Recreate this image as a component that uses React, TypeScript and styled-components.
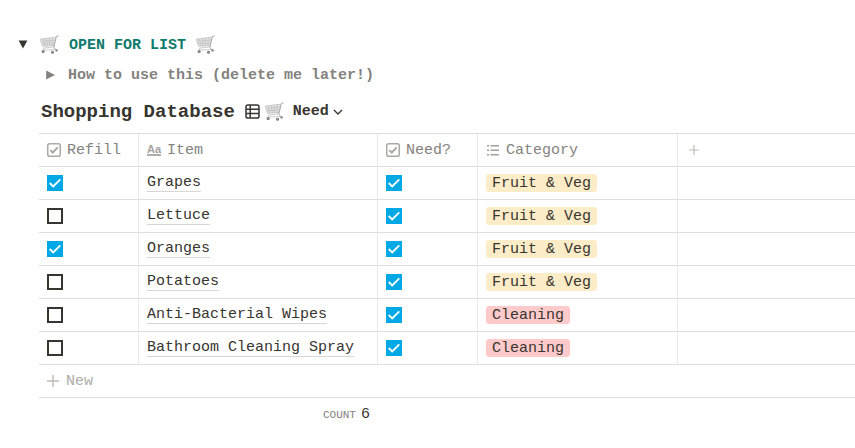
import React, { useState } from "react";
import styled, { createGlobalStyle } from "styled-components";

const GlobalStyle = createGlobalStyle`
  * { box-sizing: border-box; }
  body {
    margin: 0;
    background: #fff;
    color: #37352f;
    font-family: "Liberation Mono", monospace;
    font-size: 15px;
    line-height: 20px;
  }
  button, input { font: inherit; color: inherit; margin: 0; }
  svg { display: block; flex: none; }
`;

const Page = styled.main`
  padding: 30px 0 16px 16px;
`;

const Label = styled.span`
  padding-top: 2px;
`;

const Toggle = styled.button<{ $nested?: boolean }>`
  display: flex;
  align-items: center;
  height: 30px;
  padding: 0;
  border: 0;
  background: none;
  font-weight: 700;
  white-space: pre;
  cursor: pointer;
  gap: ${(p) => (p.$nested ? 12 : 9)}px;
  margin-left: ${(p) => (p.$nested ? 28 : 0)}px;
  color: ${(p) => (p.$nested ? "#84827e" : "#0f7b6c")};
`;

const Content = styled.section`
  padding-left: 23px;
`;

const Heading = styled.header`
  display: flex;
  align-items: center;
  gap: 10px;
  height: 43px;
  padding-left: 2px;
`;

const Title = styled.h2`
  margin: 0;
  font-size: 19px;
  line-height: 22px;
`;

const ViewButton = styled.button`
  display: flex;
  align-items: center;
  gap: 4px;
  padding: 0;
  border: 0;
  background: none;
  font-weight: 700;
  cursor: pointer;
`;

const ViewName = styled.span`
  padding-left: 4px;
`;

const Table = styled.table`
  width: 100%;
  table-layout: fixed;
  border-collapse: separate;
  border-spacing: 0;
  border-top: 1px solid #dededd;
`;

const Column = styled.col<{ $width?: number }>`
  width: ${(p) => (p.$width ? p.$width + "px" : "auto")};
`;

const HeadCell = styled.th`
  height: 33px;
  padding: 0 8px;
  border-bottom: 1px solid #dededd;
  border-right: 1px solid #e9e9e8;
  color: #84827e;
  font-weight: 400;
  text-align: left;
  &:last-child { border-right: 0; }
`;

const HeadLabel = styled.span`
  display: flex;
  align-items: center;
  gap: 6px;
`;

const Cell = styled.td`
  height: 33px;
  padding: 0 8px;
  border-bottom: 1px solid #dededd;
  border-right: 1px solid #e9e9e8;
  white-space: nowrap;
  &:last-child { border-right: 0; }
`;

const NewCell = styled.td`
  height: 33px;
  padding: 0 8px;
  border-bottom: 1px solid #dededd;
`;

const CountCell = styled.td`
  height: 34px;
  padding: 0 8px;
  text-align: right;
`;

const CountLabel = styled.span`
  margin-right: 5px;
  color: #84827e;
  font-size: 11px;
`;

const PlainButton = styled.button<{ $inset?: boolean }>`
  display: flex;
  align-items: center;
  gap: 7px;
  padding: 0 ${(p) => (p.$inset ? 3 : 0)}px;
  border: 0;
  background: none;
  color: #aeadaa;
  cursor: pointer;
`;

const ItemLink = styled.a`
  display: block;
  width: fit-content;
  padding-top: 1px;
  color: inherit;
  line-height: 16px;
  text-decoration: none;
  border-bottom: 1px solid #d8d7d5;
`;

const Tag = styled.span<{ $color: string }>`
  display: block;
  width: fit-content;
  padding: 1px 6px 0;
  border-radius: 3px;
  line-height: 17px;
  background: ${(p) => p.$color};
`;

const CheckWrap = styled.span`
  display: grid;
  width: 16px;
  height: 16px;
  & > * { grid-area: 1 / 1; }
  & > svg { pointer-events: none; place-self: center; z-index: 1; }
`;

const CheckInput = styled.input`
  appearance: none;
  width: 16px;
  height: 16px;
  border: 2px solid #37352f;
  background: #fff;
  cursor: pointer;
  &:checked { border: 0; background: #00a9e6; }
`;

const Cart = () => (
  <svg width="21" height="20" viewBox="0 0 21 20" fill="none" aria-hidden="true">
    <path d="M1.2 4.1 16.6 2.2 15 10.8 4 11.5Z" fill="#e4e4e4" />
    <path d="M1.2 4.1 16.6 2.2M2 6.5 16 5M2.8 8.8 15.5 7.8M3.4 11.3 15 10.5M4.2 3.8 6 11.2M7.2 3.5 8.4 11.1M10.2 3.1 10.7 10.9M13.4 2.7 12.9 10.8M1.2 4.1 3.5 11.5" stroke="#bcbcbc" strokeWidth=".7" />
    <path d="M19.2 .9 17.3 1.6 14.8 12.1 17 15.1" stroke="#a2a2a2" strokeWidth="1" strokeLinecap="round" strokeLinejoin="round" />
    <path d="M14.8 11.8 4.5 13.2 4 15.2 17 14.5" stroke="#c4c4c4" strokeWidth=".9" />
    <circle cx="4.1" cy="16.5" r="1.5" fill="#747474" />
    <circle cx="13.5" cy="17.2" r="1.5" fill="#747474" />
    <circle cx="17.6" cy="15.4" r="1.2" fill="#808080" />
    <circle cx="4.1" cy="16.5" r=".5" fill="#bbb" />
    <circle cx="13.5" cy="17.2" r=".5" fill="#bbb" />
  </svg>
);

const Triangle = ({ open }: { open?: boolean }) => (
  <svg width={open ? 14 : 12} height="12" viewBox="0 0 12 12" aria-hidden="true">
    <path d={open ? "M1.6 1.6H10.4L6 9.6Z" : "M2.2 1.6 11 6 2.2 10.4Z"} fill={open ? "#37352f" : "#84827e"} />
  </svg>
);

const GridIcon = () => (
  <svg width="15" height="15" viewBox="0 0 15 15" fill="none" stroke="#37352f" strokeWidth="1.5" aria-hidden="true">
    <rect x="1" y="1" width="13" height="13" rx="1.8" />
    <path d="M1 5.2H14M1 9.6H14M5.2 1V14" />
  </svg>
);

const Chevron = () => (
  <svg width="10" height="10" viewBox="0 0 10 10" fill="none" stroke="#37352f" strokeWidth="1.3" aria-hidden="true">
    <path d="M1 3 5 7 9 3" />
  </svg>
);

const BoxIcon = () => (
  <svg width="14" height="14" viewBox="0 0 14 14" fill="none" stroke="#aaa9a6" aria-hidden="true">
    <rect x=".75" y=".75" width="12.5" height="12.5" rx="1.8" strokeWidth="1.5" />
    <path d="M3.3 7.1 5.8 9.5 10.7 4.4" strokeWidth="2" />
  </svg>
);

const TextIcon = styled.span`
  width: 14px;
  border-bottom: 2px solid #aeadaa;
  color: #a3a19e;
  font: 700 11px/10px "Liberation Sans", sans-serif;
`;

const ListIcon = () => (
  <svg width="14" height="14" viewBox="0 0 14 14" stroke="#a4a29f" strokeWidth="1.5" aria-hidden="true">
    <path d="M1 2.75h2M1 7.25h2M1 11.75h2M4.5 2.75H13M4.5 7.25H13M4.5 11.75H13" />
  </svg>
);

const Plus = ({ size }: { size: number }) => (
  <svg width={size} height={size} viewBox="0 0 12 12" stroke="#bcbbb8" strokeWidth="1.4" aria-hidden="true">
    <path d="M0 6H12M6 0V12" />
  </svg>
);

function Checkbox({ initial, label }: { initial: boolean; label: string }) {
  const [checked, setChecked] = useState(initial);
  return (
    <CheckWrap>
      <CheckInput type="checkbox" aria-label={label} checked={checked} onChange={() => setChecked(!checked)} />
      {checked && (
        <svg width="12" height="12" viewBox="0 0 12 12" fill="none" stroke="#fff" strokeWidth="1.8" aria-hidden="true">
          <path d="M.7 6 4.2 9.5 11.3 2.4" />
        </svg>
      )}
    </CheckWrap>
  );
}

const tagColors: Record<string, string> = {
  "Fruit & Veg": "#fdecc8",
  Cleaning: "#ffcaca",
};

const items = [
  { name: "Grapes", refill: true, category: "Fruit & Veg" },
  { name: "Lettuce", refill: false, category: "Fruit & Veg" },
  { name: "Oranges", refill: true, category: "Fruit & Veg" },
  { name: "Potatoes", refill: false, category: "Fruit & Veg" },
  { name: "Anti-Bacterial Wipes", refill: false, category: "Cleaning" },
  { name: "Bathroom Cleaning Spray", refill: false, category: "Cleaning" },
];

export default function App() {
  return (
    <Page>
      <GlobalStyle />
      <Toggle aria-expanded="true">
        <Triangle open />
        <Cart />
        <Label>OPEN FOR LIST</Label>
        <Cart />
      </Toggle>
      <Toggle $nested aria-expanded="false">
        <Triangle />
        <Label>How to use this (delete me later!)</Label>
      </Toggle>
      <Content>
        <Heading>
          <Title>Shopping Database</Title>
          <ViewButton aria-haspopup="menu">
            <GridIcon />
            <Cart />
            <ViewName>Need</ViewName>
            <Chevron />
          </ViewButton>
        </Heading>
        <Table>
          <colgroup>
            <Column $width={100} />
            <Column $width={239} />
            <Column $width={100} />
            <Column $width={200} />
            <Column />
          </colgroup>
          <thead>
            <tr>
              <HeadCell scope="col"><HeadLabel><BoxIcon /><Label>Refill</Label></HeadLabel></HeadCell>
              <HeadCell scope="col"><HeadLabel><TextIcon aria-hidden="true">Aa</TextIcon><Label>Item</Label></HeadLabel></HeadCell>
              <HeadCell scope="col"><HeadLabel><BoxIcon /><Label>Need?</Label></HeadLabel></HeadCell>
              <HeadCell scope="col"><HeadLabel><ListIcon /><Label>Category</Label></HeadLabel></HeadCell>
              <HeadCell scope="col"><PlainButton $inset aria-label="Add column"><Plus size={10} /></PlainButton></HeadCell>
            </tr>
          </thead>
          <tbody>
            {items.map((item) => (
              <tr key={item.name}>
                <Cell><Checkbox initial={item.refill} label={`Refill ${item.name}`} /></Cell>
                <Cell><ItemLink href="#">{item.name}</ItemLink></Cell>
                <Cell><Checkbox initial label={`Need ${item.name}`} /></Cell>
                <Cell><Tag $color={tagColors[item.category]}>{item.category}</Tag></Cell>
                <Cell />
              </tr>
            ))}
          </tbody>
          <tfoot>
            <tr>
              <NewCell colSpan={5}><PlainButton><Plus size={12} /><Label>New</Label></PlainButton></NewCell>
            </tr>
            <tr>
              <CountCell colSpan={2}><CountLabel>COUNT</CountLabel>{items.length}</CountCell>
              <td colSpan={3} />
            </tr>
          </tfoot>
        </Table>
      </Content>
    </Page>
  );
}
